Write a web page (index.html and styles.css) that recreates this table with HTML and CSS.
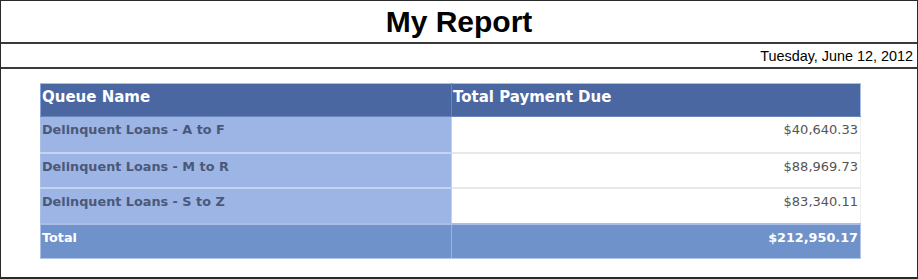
FILE: index.html
```html
<!DOCTYPE html>
<html>
<head>
<meta charset="utf-8">
<link rel="stylesheet" href="styles.css">
</head>
<body>
<div class="frame">
  <div class="title">My Report</div>
  <div class="date">Tuesday, June 12, 2012</div>
  <div class="content">
    <table class="report">
      <thead>
        <tr><th class="c1">Queue Name</th><th class="c2">Total Payment Due</th></tr>
      </thead>
      <tbody>
        <tr class="tall"><td class="name">Delinquent Loans - A to F</td><td class="amt">$40,640.33</td></tr>
        <tr><td class="name">Delinquent Loans - M to R</td><td class="amt">$88,969.73</td></tr>
        <tr class="tall"><td class="name">Delinquent Loans - S to Z</td><td class="amt">$83,340.11</td></tr>
      </tbody>
      <tfoot>
        <tr><td class="tname">Total</td><td class="tamt">$212,950.17</td></tr>
      </tfoot>
    </table>
  </div>
</div>
</body>
</html>
```
FILE: styles.css
```css
html, body { margin: 0; padding: 0; background: #fff; }
.frame {
  width: 916px;
  height: 276px;
  border: 1px solid #2a2a2a;
  border-width: 1px 2px 2px 1px;
  display: flex;
  flex-direction: column;
}
.title {
  height: 41px;
  border-bottom: 2px solid #3a3a3a;
  font: bold 30px/41px "Liberation Sans", Arial, sans-serif;
  text-align: center;
  color: #000;
}
.date {
  height: 23px;
  border-bottom: 2px solid #3a3a3a;
  font: 14.4px/24px "Liberation Sans", Arial, sans-serif;
  text-align: right;
  padding-right: 4px;
  color: #000;
}
.content {
  padding: 14px 0 0 39px;
}
.report {
  width: 821px;
  border-collapse: collapse;
  table-layout: fixed;
  font-family: "DejaVu Sans", Verdana, sans-serif;
}
.report th, .report td {
  text-align: left;
  vertical-align: top;
  padding: 0 2px 0 1px;
}
.report th {
  background: #4a67a2;
  color: #fff;
  font-size: 15px;
  font-weight: bold;
  height: 33px;
  box-sizing: border-box;
  padding-top: 4px;
  line-height: 18px;
  border: 1px solid #6b86bb;
  border-top-color: #a9bde6;
}
.report th.c1 { width: 411px; border-left-color: #8aa3d6; }
.report th.c2 { border-right-color: #a9bde6; }
.report tbody td {
  height: 35px;
  box-sizing: border-box;
  padding-top: 5px;
  line-height: 16px;
}
.report tbody tr.tall td { height: 36px; }
.report td.name {
  background: #9db5e4;
  color: #4b5879;
  font-weight: bold;
  font-size: 12.8px;
  border-top: 2px solid #c6d4f1;
  border-left: 1px solid #a9bde6;
  border-right: 1px solid #c3d1ef;
}
.report tbody tr:first-child td { border-top: 1px solid #6b86bb; }
.report td.amt {
  background: #fff;
  color: #555;
  font-size: 13px;
  text-align: right;
  border-top: 2px solid #e8e8e8;
  border-right: 1px solid #eeeeee;
}
.report tfoot td {
  background: #7092cb;
  color: #fff;
  font-weight: bold;
  font-size: 12.8px;
  height: 35px;
  box-sizing: border-box;
  padding-top: 5px;
  line-height: 16px;
  border-top: 2px solid #a9bde6;
  border-bottom: 1px solid #b3c5ea;
}
.report td.tname { border-left: 1px solid #a9bde6; border-right: 1px solid #9bb2e0; }
.report td.tamt { text-align: right; border-right: 1px solid #b3c5ea; }
```
